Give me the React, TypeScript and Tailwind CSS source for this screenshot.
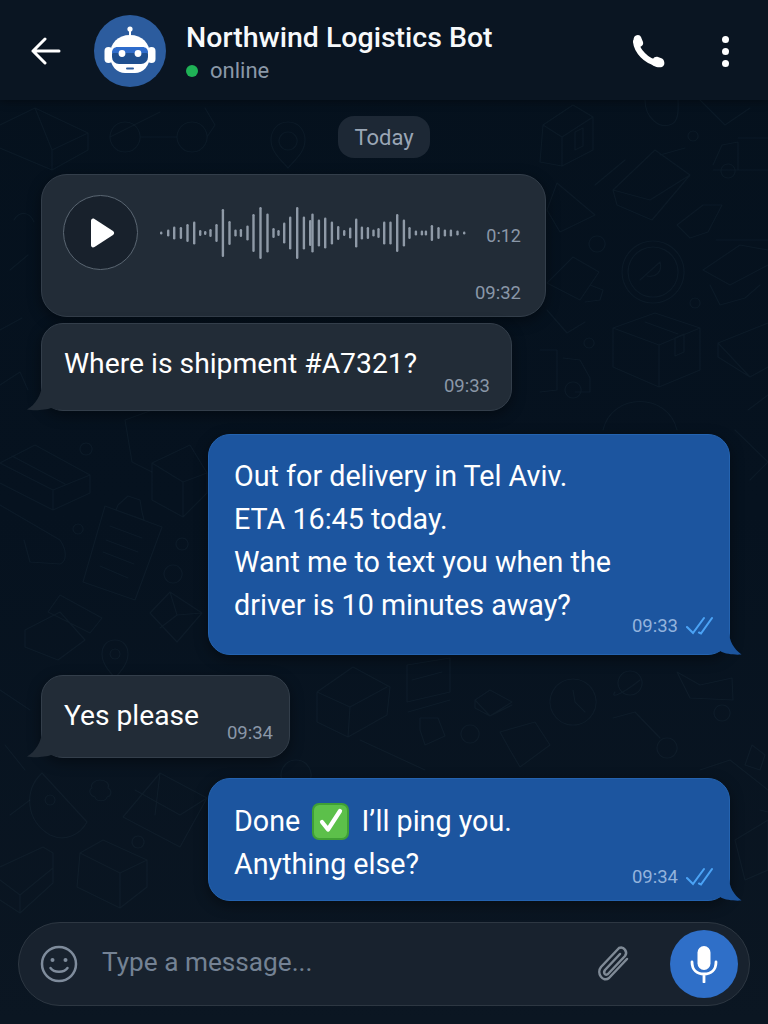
const wave: [number, number][] = [[161,3],[168,7],[174,13],[180.7,12],[187.3,18],[194,23],[200,6],[205,4],[210.3,8],[216.3,18],[222.7,48],[229.3,24],[235.3,7],[240.7,8],[247.3,15],[253.3,38],[260.3,52],[267.3,39],[273.3,10],[278.3,6],[284,21],[290,33],[297,52],[303.7,33],[310,26],[312.3,39],[318.7,27],[325,31],[331.7,23],[338,14],[344,6],[350,11],[356,29],[361.7,13],[367.7,12],[373.3,7],[378.3,10],[384,23],[390.3,23],[397,38],[403.7,27],[409.3,12],[415.7,5],[421.7,5],[425.7,5],[431.7,16],[438.3,12],[444.7,7],[450.7,7],[457.3,5],[464,3]];

// faint line drawings of the wallpaper, in page coordinates
const doodles = [
  // top left
  "M0 125 L35 108 L88 133 L88 150 L52 170 L0 148 M35 108 L52 150 L88 133 M52 150 L52 170",
  "M110 137 L160 112 M125 122 A15 15 0 1 0 125.100 122 Z M192 122 A15 15 0 1 0 192.100 122 Z M140 137 L177 137 M207 137 L215 125 L205 108",
  "M288 122 C300 122 305 132 305 140 C305 152 295 160 288 168 C281 160 271 152 271 140 C271 132 276 122 288 122 Z M288 132 A9 9 0 1 0 288.100 132 Z",
  // left column
  "M0 463 L35 445 L90 475 L90 493 L53 510 L0 483 M0 463 L53 490 L90 475 M53 490 L53 510 M12 456 L65 484",
  "M152 463 L190 445 L207 473 L207 493 L183 517 L152 500 Z M152 463 L183 482 L207 473 M183 482 L183 517",
  "M105 506 L162 527 L135 600 L83 582 Z M118 505 L128 496 L140 500 L142 512 L144 520 L116 510 Z M110 526 L142 538 M106 540 L138 552 M103 552 L134 564 M100 566 L128 578",
  "M60 595 L102 618 L90 633 L48 612 Z M25 630 L60 612 L85 640 L58 660 L25 647 Z",
  "M115 640 C124 640 128 647 128 654 C128 664 120 672 115 678 C110 672 102 664 102 654 C102 647 106 640 115 640 Z M115 649 A5 5 0 1 0 115.100 649 Z",
  "M150 613 L170 592 L202 613 L177 642 Z M170 592 L177 615 L202 613 M177 615 L160 628",
  "M0 505 L60 540 C68 552 66 562 60 564 L30 562 L24 540",
  "M86 443 A6 6 0 1 0 86.100 443 Z M78 524 A5 5 0 1 0 78.100 524 Z M182 538 A6 6 0 1 0 182.100 538 Z M173 565 A9 9 0 1 0 173.100 565 Z",
  "M0 330 L22 318 M0 385 L20 372 L28 390 M10 270 L28 255 M14 220 C20 210 30 212 34 222",
  "M125 420 L132 462 L152 472 M125 420 L180 400",
  // lower left
  "M80 853 L103 840 L147 860 L147 887 L120 908 L77 887 Z M80 853 L120 873 L147 860 M120 873 L120 908",
  "M123 817 L160 773 L207 798 L180 847 Z M135 790 L180 815 L207 798 M160 773 L155 815",
  "M0 867 L43 847 L53 853 L53 883 L20 913 L0 900 M0 880 L20 895 L53 868 M20 895 L20 913",
  "M42 773 C24 790 25 820 50 835 C65 842 80 835 87 822 L42 773 Z M50 795 A5 5 0 1 0 50.100 795 Z",
  "M100 780 C106 780 110 784 108 788 C112 790 112 796 107 797 C106 802 96 802 95 797 C90 796 88 790 92 788 C90 784 95 780 100 780 Z",
  "M138 836 A6 6 0 1 0 138.100 836 Z",
  "M0 690 L30 710 M5 745 L25 770 M10 815 L30 800",
  // centre
  "M317 692 L353 667 L390 687 L387 715 L348 737 L317 722 Z M317 692 L350 707 L387 687 M350 707 L348 737",
  "M407 665 L450 658 L450 692 L407 702 Z M412 680 L442 672 M408 712 L450 700",
  "M475 700 L490 690 L512 702 L490 716 Z M475 700 L475 708 L490 716 L512 705",
  "M500 732 L535 722 L550 745 L520 767 L510 750 Z",
  "M420 718 L438 718 L445 736 L425 745 L420 730 Z M470 725 A9 9 0 1 0 470.100 725 Z",
  "M296 760 A15 15 0 1 0 296.100 760 Z M360 740 L425 770",
  // right column
  "M543 125 L573 105 L593 117 L593 150 L562 166 L540 162 Z M543 125 L562 137 L593 117 M562 137 L562 166 M575 132 L583 128 L583 146 L575 150 Z",
  "M613 190 L655 150 L690 175 L652 220 L617 205 Z M613 190 L650 200 L690 175 M595 185 L625 160 M660 155 L685 148",
  "M713 165 L722 145 L738 142 L738 170 L713 170 M738 138 L768 138 M738 170 L768 170 M728 164 A7 7 0 1 0 728.100 164 Z",
  "M653 241 A31 31 0 1 0 653.100 241 Z M653 247 A25 25 0 1 0 653.100 247 Z M640 280 L660 262 C663 272 655 278 647 276",
  "M613 328 L655 313 L700 328 L700 370 L659 387 L613 367 Z M613 328 L659 345 L700 328 M659 345 L659 387 M645 322 L678 334 M675 338 L684 334 L684 352 L675 356 Z",
  "M718 343 L768 323 M718 343 L750 377 L768 367 M718 343 L718 357 L750 377",
  "M540 350 L557 350 L557 390 L540 392 M563 358 L580 360 L590 378 L590 392 L575 392 M573 382 A8 8 0 1 0 573.100 382 Z",
  "M703 270 L740 245 L768 250 M703 270 L730 285 L768 265 M716 240 L768 240 M710 285 L720 305 L745 298 L760 285",
  "M677 225 L703 205 L722 205 L708 232 L690 238 Z",
  "M547 283 L573 257 L599 272 L580 300 Z M547 310 L567 333 L585 322 M590 285 L603 290 L600 300 L585 302",
  "M547 210 L557 183 L595 215 L560 232 Z",
  "M597 236 A8 8 0 1 0 597.100 236 Z M589 338 A5 5 0 1 0 589.100 338 Z M693 131 A5 5 0 1 0 693.100 131 Z M695 298 A5 5 0 1 0 695.100 298 Z",
  "M603 430 C612 392 668 392 677 430",
  "M645 100 C645 118 660 130 672 124 C680 120 678 105 678 100 M700 100 L725 125 L750 108",
  "M573 679 A23 23 0 1 0 573.100 679 Z M573 690 L575 702 L585 712",
  "M630 671 A12 12 0 1 0 630.100 671 Z M615 692 C610 698 620 696 640 680",
  "M677 672 L700 685 L732 678 L733 700 L690 698 Z M722 705 A8 8 0 1 0 722.100 705 Z",
  "M613 718 L635 712 L660 738 M667 738 A10 10 0 1 0 667.100 738 Z",
  "M752 745 L765 755 L760 770 L745 765 Z",
  "M700 770 L730 760 L768 790",
  "M560 500 L600 470 L640 490 L640 530 L600 550 L560 530 Z M560 500 L600 515 L640 490 M600 515 L600 550",
  "M748 410 L768 395 M735 430 L768 462 L750 480",
  "M655 800 L698 820 L680 870 L635 850 Z M760 810 L768 812 M735 840 L768 820 L768 870 L745 880 Z",
];

function Wallpaper() {
  return (
    <svg className="absolute inset-0 w-[768px] h-[1024px]" viewBox="0 0 768 1024" fill="none">
      {doodles.map((d, i) => (
        <path key={i} d={d} stroke="#a9c6e4" strokeOpacity="0.045" strokeWidth="1.2" strokeLinejoin="round" strokeLinecap="round" />
      ))}
    </svg>
  );
}

function Robot() {
  return (
    <svg width="74" height="74" viewBox="0 0 74 74">
      <circle cx="37" cy="37" r="36" fill="#2c5c9e" />
      <circle cx="37" cy="15" r="2.600" fill="#fff" />
      <rect x="36" y="16" width="2" height="6" fill="#fff" />
      <rect x="11.500" y="33" width="8" height="16" rx="4" fill="#fff" />
      <rect x="54.500" y="33" width="8" height="16" rx="4" fill="#fff" />
      <path d="M37 21 C49 21 57 29 57 41 C57 52 50 59 42 59 H32 C24 59 17 52 17 41 C17 29 25 21 37 21 Z" fill="#fff" />
      <rect x="19" y="33" width="36" height="17" rx="7" fill="#1f4f8f" />
      <path d="M19 39 C19 35 21 33 25 33 H49 C53 33 55 35 55 39 Z" fill="#2f6ccb" />
      <circle cx="29" cy="39.500" r="3.400" fill="#fff" />
      <circle cx="45" cy="39.500" r="3.400" fill="#fff" />
      <rect x="33" y="53.500" width="8" height="2" rx="1" fill="#2c5c9e" />
    </svg>
  );
}

function Phone() {
  return (
    <svg width="36" height="36" viewBox="0 0 36 36" fill="none">
      <path d="M6 9 C7 18 16 28 27 30" stroke="#fff" strokeWidth="6" strokeLinecap="round" />
      <path d="M5 3 C8 1 10 2 11 4 L13 9 C13.500 11 13 12 11 13.500 L7 15 C4 13 2 6 5 3 Z" fill="#fff" />
      <path d="M34 28 C35 31 34 33 32 34 C27 35 22 33 21 30 L23 26 C24 24 26 23.500 28 24 L32 25.500 C33 26 33.500 27 34 28 Z" fill="#fff" />
    </svg>
  );
}

function Ticks() {
  return (
    <svg width="27" height="20" viewBox="0 0 27 20" fill="none" stroke="#4ba3f5" strokeWidth="2.100" strokeLinecap="round">
      <path d="M1 11 L7 17 L18 2" />
      <path d="M13 16.500 L15 17.500 L26 2" />
    </svg>
  );
}

function TailLeft() {
  return (
    <svg className="absolute left-[-16px] bottom-[-1px]" width="32" height="28" viewBox="0 0 32 28">
      <path d="M16 0 C16 12 9 22 1 26.500 C8 28 20 27 25 25 L32 27 L32 0 Z" fill="#222c37" />
    </svg>
  );
}

function TailRight() {
  return (
    <svg className="absolute right-[-13px] bottom-[-1px]" width="30" height="24" viewBox="0 0 30 24">
      <path d="M17 0 C17 10 22 18 29.500 23.500 C24 24 14 23.500 8 20 L0 22 L0 0 Z" fill="#1c559f" />
    </svg>
  );
}

function DoneCheck() {
  return (
    <svg className="inline-block align-[-9px] ml-[5px] mr-[5px]" width="37" height="37" viewBox="0 0 37 37">
      <rect x="0" y="0" width="37" height="37" rx="7" fill="#3f9f35" />
      <rect x="2" y="2" width="33" height="33" rx="5.500" fill="#5cc04a" />
      <path d="M10 19 L16 26.500 L28 8" fill="none" stroke="#fff" strokeWidth="4.200" strokeLinecap="round" strokeLinejoin="round" />
    </svg>
  );
}

export default function App() {
  return (
    <div className="relative w-[768px] h-[1024px] overflow-hidden flex flex-col bg-gradient-to-b from-[#05111d] via-[#06121f] to-[#0b1622] font-['Roboto',sans-serif] text-white">
      <Wallpaper />

      <header className="relative h-[100px] shrink-0 flex items-center bg-[#0a1522] shadow-[0_2px_8px_rgba(0,0,0,0.35)] pl-[31px] pt-[2px]">
        <svg width="30" height="30" viewBox="0 0 30 30" fill="none" stroke="#fff" strokeWidth="3" strokeLinecap="round" strokeLinejoin="round">
          <path d="M2 15 H28 M14 3 L2 15 L14 27" />
        </svg>
        <div className="ml-[32px]"><Robot /></div>
        <div className="ml-[19px] mt-[2px]">
          <div className="text-[28.500px] leading-[38px] font-medium text-[#f7f9fb]">Northwind Logistics Bot</div>
          <div className="flex items-center gap-[12px] text-[22px] leading-[28px] text-[#8b98a8]">
            <span className="w-[12px] h-[12px] rounded-full bg-[#1fb256]" />
            online
          </div>
        </div>
        <div className="ml-auto mr-[39px] flex items-center gap-[56px]">
          <Phone />
          <div className="flex flex-col gap-[5px]">
            <span className="w-[7px] h-[7px] rounded-full bg-white" />
            <span className="w-[7px] h-[7px] rounded-full bg-white" />
            <span className="w-[7px] h-[7px] rounded-full bg-white" />
          </div>
        </div>
      </header>

      <main className="relative flex-1 flex flex-col items-start">
        <div className="self-center mt-[16px] h-[42px] w-[92px] rounded-[16px] bg-[#1d2835] flex items-center justify-center text-[22px] text-[#9aa6b5]">Today</div>

        <div className="mt-[16px] ml-[41px] w-[505px] h-[143px] rounded-[26px] bg-[#222c37] border border-[#333e4a] shadow-[0_4px_14px_rgba(0,0,0,0.4)] pl-[21px] pr-[24px] pt-[20px] flex flex-col">
          <div className="flex items-center">
            <div className="w-[75px] h-[75px] rounded-full bg-[#18212c] border-[1.500px] border-[#5a6672] flex items-center justify-center pl-[3px]">
              <svg width="26" height="30" viewBox="0 0 26 30"><path d="M2 3 C2 1 3.500 0 5.500 1 L24 13 C25.500 14 25.500 16 24 17 L5.500 29 C3.500 30 2 29 2 27 Z" fill="#fff" /></svg>
            </div>
            <svg className="ml-[22px]" width="308" height="56" viewBox="0 0 308 56">
              {wave.map(([x, h], i) => (
                <rect key={i} x={x - 161} y={28 - h / 2} width="2.400" height={h} rx="1.200" fill="#8f9aa7" />
              ))}
            </svg>
            <span className="ml-auto text-[18px] mt-[5px] text-[#8a97a8]">0:12</span>
          </div>
          <span className="self-end mt-[11px] text-[18.500px] leading-[24px] text-[#8a97a8]">09:32</span>
        </div>

        <div className="relative mt-[6px] ml-[41px] w-[471px] h-[88px] rounded-[22px] bg-[#222c37] border border-[#333e4a] shadow-[0_4px_14px_rgba(0,0,0,0.4)] flex justify-between pl-[22px] pr-[21px] pt-[20px]">
          <TailLeft />
          <span className="relative text-[28.300px] leading-[40px]">Where is shipment #A7321?</span>
          <span className="relative self-end mb-[12px] text-[18.500px] leading-[24px] text-[#8a97a8]">09:33</span>
        </div>

        <div className="relative mt-[23px] ml-[208px] w-[522px] h-[221px] rounded-[22px] bg-[#1c559f] border border-[#2463b0] shadow-[0_4px_14px_rgba(0,0,0,0.4)] flex justify-between pl-[25px] pr-[16px] pt-[20px]">
          <TailRight />
          <div className="relative text-[28.700px] leading-[43px]">
            <div>Out for delivery in Tel Aviv.</div>
            <div>ETA 16:45 today.</div>
            <div>Want me to text you when the</div>
            <div>driver is 10 minutes away?</div>
          </div>
          <div className="relative self-end mb-[16px] flex items-center gap-[8px] text-[18.500px] leading-[24px] text-[#93b3dd]">09:33 <Ticks /></div>
        </div>

        <div className="relative mt-[20px] ml-[41px] w-[249px] h-[83px] rounded-[22px] bg-[#222c37] border border-[#333e4a] shadow-[0_4px_14px_rgba(0,0,0,0.4)] flex justify-between pl-[22px] pr-[16px] pt-[20px]">
          <TailLeft />
          <span className="relative text-[28.200px] leading-[40px]">Yes please</span>
          <span className="relative self-end mb-[12px] text-[18.500px] leading-[24px] text-[#8a97a8]">09:34</span>
        </div>

        <div className="relative mt-[20px] ml-[208px] w-[522px] h-[123px] rounded-[22px] bg-[#1c559f] border border-[#2463b0] shadow-[0_4px_14px_rgba(0,0,0,0.4)] flex justify-between pl-[25px] pr-[16px] pt-[21px]">
          <TailRight />
          <div className="relative text-[28.700px] leading-[43px]">
            <div>Done <DoneCheck /> I’ll ping you.</div>
            <div>Anything else?</div>
          </div>
          <div className="relative self-end mb-[11px] flex items-center gap-[8px] text-[18.500px] leading-[24px] text-[#93b3dd]">09:34 <Ticks /></div>
        </div>

        <div className="relative mt-[21px] ml-[18px] w-[732px] h-[84px] rounded-[42px] bg-[#18222e] border border-[#2d3742] flex items-center pl-[21px] pr-[11px]">
          <svg className="-mt-[1px]" width="38" height="38" viewBox="0 0 38 38" fill="none" stroke="#7f8c9c" strokeWidth="2.500" strokeLinecap="round">
            <circle cx="19" cy="19" r="17" />
            <circle cx="12.500" cy="15" r="2" fill="#7f8c9c" stroke="none" />
            <circle cx="25.500" cy="15" r="2" fill="#7f8c9c" stroke="none" />
            <path d="M10.500 23 C14 28 24 28 27.500 23" />
          </svg>
          <span className="ml-[24px] -mt-[2px] text-[26.200px] text-[#748294]">Type a message...</span>
          <svg className="ml-auto" width="34" height="40" viewBox="0 0 34 40" fill="none" stroke="#7f8a96" strokeWidth="2.500" strokeLinecap="round" strokeLinejoin="round">
            <path d="M24 10 L9 26 C7 29 9 32 12 30 L29 12 C32 8 28 2 23 4 L5 23 C0 29 7 39 13 34 L31 15" />
          </svg>
          <div className="ml-[40px] w-[68px] h-[68px] rounded-full bg-[#2f6fc8] flex items-center justify-center">
            <svg width="28" height="38" viewBox="0 0 28 38" fill="none">
              <rect x="7.500" y="1" width="13" height="24" rx="6.500" fill="#fff" />
              <path d="M2 17 C2 25 7 29 14 29 C21 29 26 25 26 17 M14 29 V37" stroke="#fff" strokeWidth="2.800" strokeLinecap="round" />
            </svg>
          </div>
        </div>
      </main>
    </div>
  );
}
